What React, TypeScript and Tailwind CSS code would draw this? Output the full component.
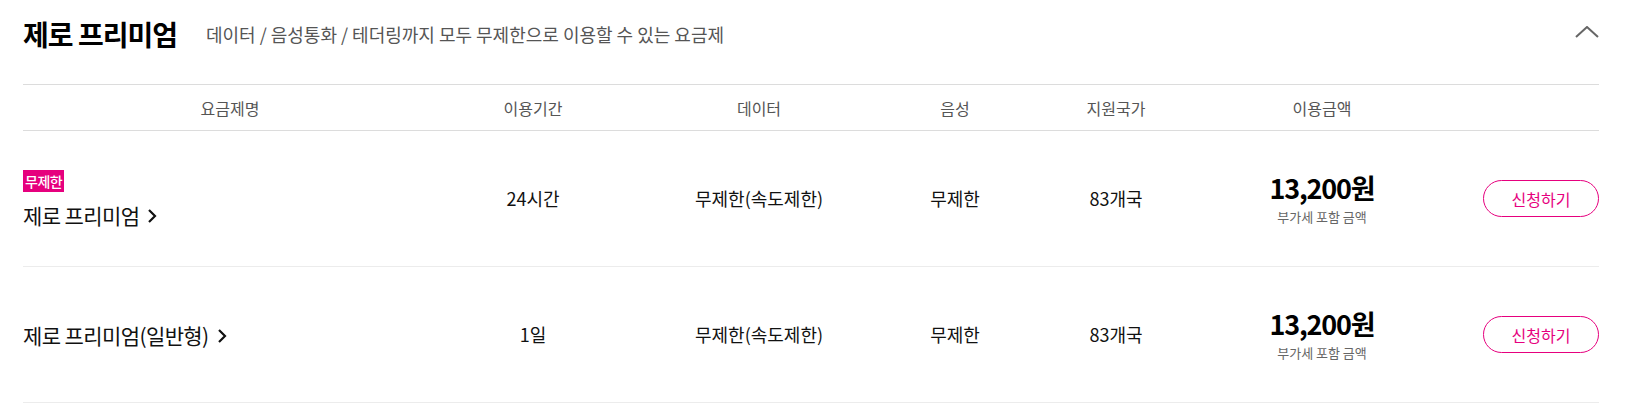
import React from "react";

const font = { fontFamily: '"Noto Sans CJK KR", "Noto Sans", sans-serif' };

const cols = "grid grid-cols-[414px_192px_260px_132px_190px_222px_1fr]";

function Chevron() {
  return (
    <svg width="10" height="16" viewBox="0 0 10 16" className="ml-[8px] mt-[2px]">
      <path d="M2 2 L8 8 L2 14" fill="none" stroke="#111" strokeWidth="2.2" />
    </svg>
  );
}

function Row({ badge, name, period }: { badge?: boolean; name: string; period: string }) {
  return (
    <div className={`${cols} h-[136px] border-b border-[#ececec] items-center text-[18px] text-[#111]`}>
      <div className="flex flex-col items-start">
        {badge && (
          <span className="bg-[#e6007e] text-white text-[14px] font-medium leading-[22px] px-[2px] h-[22px] mb-[10px] tracking-[-0.5px]">
            무제한
          </span>
        )}
        <div className="flex items-center text-[21px] leading-[26px] tracking-[-0.6px]">
          {name}
          <Chevron />
        </div>
      </div>
      <div className="text-center">{period}</div>
      <div className="text-center">무제한(속도제한)</div>
      <div className="text-center">무제한</div>
      <div className="text-center">83개국</div>
      <div className="flex flex-col items-center">
        <div className="text-[27px] font-bold leading-[32px] tracking-[-1.2px] text-black">13,200원</div>
        <div className="text-[13px] text-[#666] leading-[18px] mt-[4px]">부가세 포함 금액</div>
      </div>
      <div className="flex justify-end">
        <button className="w-[116px] h-[37px] rounded-full border border-[#e6007e] text-[#e6007e] text-[16px] bg-white">
          신청하기
        </button>
      </div>
    </div>
  );
}

export default function App() {
  return (
    <div style={font} className="w-[1629px] h-[409px] bg-white pl-[23px] pr-[30px]">
      <div className="h-[85px] border-b border-[#dcdcdc] flex items-start pt-[16px]">
        <div className="flex items-center h-[36px] w-full">
          <h2 className="text-[28px] font-bold text-black tracking-[-1px] leading-[36px]">제로 프리미엄</h2>
          <p className="ml-[29px] text-[18px] text-[#555]">
            데이터 / 음성통화 / 테더링까지 모두 무제한으로 이용할 수 있는 요금제
          </p>
          <svg width="24" height="12" viewBox="0 0 24 12" className="ml-auto mb-[4px]">
            <path d="M1 11 L12 1 L23 11" fill="none" stroke="#666" strokeWidth="2" />
          </svg>
        </div>
      </div>
      <div className={`${cols} h-[46px] border-b border-[#dcdcdc] items-center text-[16px] text-[#555]`}>
        <div className="text-center">요금제명</div>
        <div className="text-center">이용기간</div>
        <div className="text-center">데이터</div>
        <div className="text-center">음성</div>
        <div className="text-center">지원국가</div>
        <div className="text-center">이용금액</div>
        <div />
      </div>
      <Row badge name="제로 프리미엄" period="24시간" />
      <Row name="제로 프리미엄(일반형)" period="1일" />
    </div>
  );
}
